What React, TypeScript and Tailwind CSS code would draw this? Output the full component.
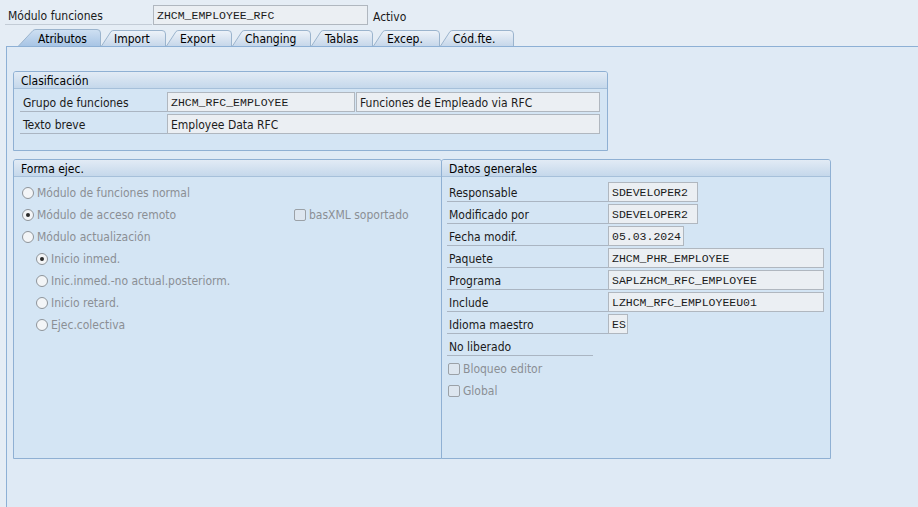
import React from "react";

type Kids = { children?: React.ReactNode };

function Field({ className = "", mono = false, children }: { className?: string; mono?: boolean } & Kids) {
  return (
    <div
      className={`h-[20px] shrink-0 border border-[#b0b7bf] bg-[#ebeff3] flex items-center pl-[3px] text-[#1b1b1b] overflow-hidden whitespace-nowrap ${
        mono ? "font-['Liberation_Mono','Courier_New',monospace] text-[11.5px] pt-[2px]" : "pt-[1px]"
      } ${className}`}
    >
      {children}
    </div>
  );
}

function Radio({ checked = false }: { checked?: boolean }) {
  return (
    <span className="w-[12px] h-[12px] rounded-full border border-[#8e949a] bg-[#f3f5f7] flex items-center justify-center shrink-0">
      {checked && <span className="w-[4px] h-[4px] rounded-full bg-[#2b2b2b]" />}
    </span>
  );
}

function Check() {
  return <span className="w-[12px] h-[12px] rounded-[2px] border border-[#9ba1a7] bg-[#dde6ef] shrink-0" />;
}

function Group({ title, className = "", children }: { title: string; className?: string } & Kids) {
  return (
    <div className={`border border-[#8fb0d3] rounded-t-[3px] bg-[#d4e5f4] flex flex-col ${className}`}>
      <div className="h-[17px] shrink-0 bg-gradient-to-b from-[#e2ebf5] to-[#c5d8eb] border-b border-[#a6c0da] flex items-center pl-[7px] pt-[1px] text-black rounded-t-[2px]">
        {title}
      </div>
      {children}
    </div>
  );
}

type TabDef = { label: string; w: number; pad: number; active?: boolean };

const tabs: TabDef[] = [
  { label: "Atributos", w: 83, pad: 20, active: true },
  { label: "Import", w: 65, pad: 13 },
  { label: "Export", w: 66, pad: 14 },
  { label: "Changing", w: 79, pad: 13 },
  { label: "Tablas", w: 62, pad: 14 },
  { label: "Excep.", w: 67, pad: 14 },
  { label: "Cód.fte.", w: 74, pad: 13 },
];

function Tab({ t }: { t: TabDef }) {
  const h = 17;
  const top = t.active ? 0.5 : 1.5;
  const s = t.active ? 15 : 10;
  const w = t.w;
  const outline = `M0.5 ${h} L${s} ${top + 1} Q${s + 1} ${top} ${s + 3} ${top} L${w - 4} ${top} Q${w - 0.5} ${top} ${w - 0.5} ${top + 3.5} L${w - 0.5} ${h}`;
  const gid = t.active ? "tabA" : "tabI";
  return (
    <div className="relative h-[17px] shrink-0" style={{ width: w }}>
      <svg className="absolute inset-0" width={w} height={h} viewBox={`0 0 ${w} ${h}`}>
        <defs>
          <linearGradient id={gid} x1="0" y1="0" x2="0" y2="1">
            {t.active ? (
              <>
                <stop offset="0" stopColor="#cfe0f2" />
                <stop offset="1" stopColor="#a8c5e5" />
              </>
            ) : (
              <>
                <stop offset="0" stopColor="#eef3f9" />
                <stop offset="1" stopColor="#c6d7ea" />
              </>
            )}
          </linearGradient>
        </defs>
        <path d={outline + " Z"} fill={`url(#${gid})`} />
        <path d={outline} fill="none" stroke="#9bb4cd" strokeWidth="1" />
      </svg>
      <div className="relative h-full flex items-center pt-[2px] text-black whitespace-nowrap" style={{ paddingLeft: t.pad }}>
        {t.label}
      </div>
    </div>
  );
}

function DRow({ label, children, labelW = "w-[161px]" }: { label: string; labelW?: string } & Kids) {
  return (
    <div className="h-[22px] flex items-start pt-[1px]">
      <div className={`${labelW} h-[20px] shrink-0 border-b border-[#aab5c2] pl-[2px] pt-[1px] leading-[20px] text-[#1a1a1a]`}>{label}</div>
      {children}
    </div>
  );
}

function RRow({ label, checked = false, indent = false }: { label: string; checked?: boolean; indent?: boolean }) {
  return (
    <div className={`h-[22px] flex items-center gap-[3px] pt-[1px] text-[#8b8f94] ${indent ? "pl-[14px]" : ""}`}>
      <Radio checked={checked} />
      <span>{label}</span>
    </div>
  );
}

export default function App() {
  return (
    <div className="w-[918px] h-[507px] bg-[#e5edf5] flex flex-col overflow-hidden text-[12px] font-['DejaVu_Sans_Condensed','Liberation_Sans',Arial,sans-serif] text-[#1a1a1a]">
      {/* top row */}
      <div className="h-[29px] shrink-0 flex items-start pt-[5px]">
        <div className="ml-[5px] w-[147px] h-[20px] border-b border-[#c3ccd6] pl-[3px] pt-[1px] leading-[20px]">Módulo funciones</div>
        <Field mono className="ml-[1px] w-[215px]">ZHCM_EMPLOYEE_RFC</Field>
        <div className="ml-[5px] pt-[2px] leading-[20px]">Activo</div>
      </div>

      {/* tabs */}
      <div className="h-[17px] shrink-0 flex pl-[18px]">
        {tabs.map((t) => (
          <Tab key={t.label} t={t} />
        ))}
      </div>

      {/* panel */}
      <div className="ml-[6px] flex-1 border-l border-t border-[#8db0d5] bg-[#dfeaf5] pt-[24px] pl-[6px] flex flex-col">
        <Group title="Clasificación" className="w-[595px] h-[80px]">
          <div className="pt-[2px] pl-[6px] flex flex-col">
            <div className="h-[22px] flex items-start pt-[1px]">
              <div className="w-[147px] h-[20px] shrink-0 border-b border-[#aab5c2] pl-[3px] pt-[1px] leading-[20px]">Grupo de funciones</div>
              <Field mono className="w-[188px]">ZHCM_RFC_EMPLOYEE</Field>
              <Field className="ml-[1px] w-[244px]">Funciones de Empleado via RFC</Field>
            </div>
            <div className="h-[22px] flex items-start pt-[1px]">
              <div className="w-[147px] h-[20px] shrink-0 border-b border-[#aab5c2] pl-[3px] pt-[1px] leading-[20px]">Texto breve</div>
              <Field className="w-[433px]">Employee Data RFC</Field>
            </div>
          </div>
        </Group>

        <div className="mt-[8px] flex">
          <Group title="Forma ejec." className="w-[429px] h-[300px]">
            <div className="pt-[4px] pl-[8px] flex flex-col">
              <RRow label="Módulo de funciones normal" />
              <div className="h-[22px] flex items-center pt-[1px]">
                <div className="w-[272px] flex items-center gap-[3px] text-[#8b8f94]">
                  <Radio checked />
                  <span>Módulo de acceso remoto</span>
                </div>
                <div className="flex items-center gap-[3px] text-[#8b8f94]">
                  <Check />
                  <span>basXML soportado</span>
                </div>
              </div>
              <RRow label="Módulo actualización" />
              <RRow label="Inicio inmed." checked indent />
              <RRow label="Inic.inmed.-no actual.posteriorm." indent />
              <RRow label="Inicio retard." indent />
              <RRow label="Ejec.colectiva" indent />
            </div>
          </Group>

          <Group title="Datos generales" className="ml-[-1px] w-[390px] h-[300px]">
            <div className="pt-[4px] pl-[5px] flex flex-col">
              <DRow label="Responsable">
                <Field mono className="w-[90px]">SDEVELOPER2</Field>
              </DRow>
              <DRow label="Modificado por">
                <Field mono className="w-[90px]">SDEVELOPER2</Field>
              </DRow>
              <DRow label="Fecha modif.">
                <Field mono className="w-[76px]">05.03.2024</Field>
              </DRow>
              <DRow label="Paquete">
                <Field mono className="w-[216px]">ZHCM_PHR_EMPLOYEE</Field>
              </DRow>
              <DRow label="Programa">
                <Field mono className="w-[216px]">SAPLZHCM_RFC_EMPLOYEE</Field>
              </DRow>
              <DRow label="Include">
                <Field mono className="w-[216px]">LZHCM_RFC_EMPLOYEEU01</Field>
              </DRow>
              <DRow label="Idioma maestro">
                <Field mono className="w-[20px]">ES</Field>
              </DRow>
              <DRow label="No liberado" labelW="w-[146px]" />
              <div className="h-[22px] flex items-center gap-[3px] pl-[1px] pt-[1px] text-[#8b8f94]">
                <Check />
                <span>Bloqueo editor</span>
              </div>
              <div className="h-[22px] flex items-center gap-[3px] pl-[1px] pt-[1px] text-[#8b8f94]">
                <Check />
                <span>Global</span>
              </div>
            </div>
          </Group>
        </div>
      </div>
    </div>
  );
}
